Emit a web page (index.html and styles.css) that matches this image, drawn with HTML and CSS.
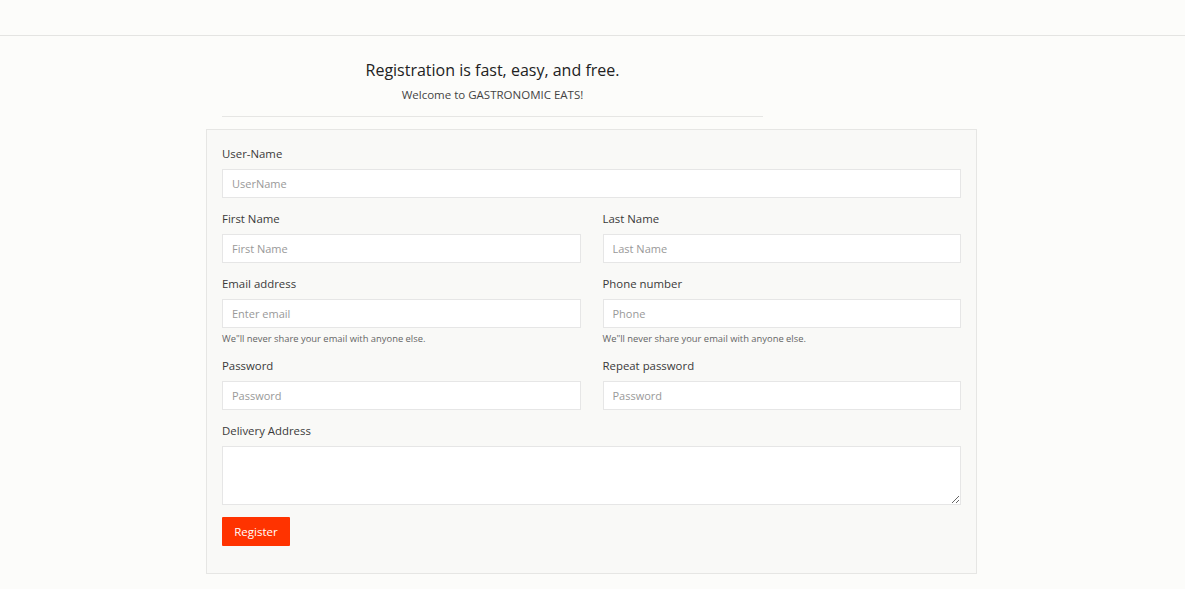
FILE: index.html
```html
<!DOCTYPE html>
<html>
<head>
<meta charset="utf-8">
<link rel="stylesheet" href="styles.css">
</head>
<body>
<header class="topbar"></header>
<main class="page">
  <div class="intro">
    <h1 class="title">Registration is fast, easy, and free.</h1>
    <p class="subtitle">Welcome to GASTRONOMIC EATS!</p>
    <hr class="rule">
  </div>
  <form class="card">
    <div class="field">
      <label class="label">User-Name</label>
      <input class="input" type="text" placeholder="UserName">
    </div>
    <div class="row">
      <div class="field">
        <label class="label">First Name</label>
        <input class="input" type="text" placeholder="First Name">
      </div>
      <div class="field">
        <label class="label">Last Name</label>
        <input class="input" type="text" placeholder="Last Name">
      </div>
    </div>
    <div class="row">
      <div class="field">
        <label class="label">Email address</label>
        <input class="input" type="text" placeholder="Enter email">
        <small class="help">We"ll never share your email with anyone else.</small>
      </div>
      <div class="field">
        <label class="label">Phone number</label>
        <input class="input" type="text" placeholder="Phone">
        <small class="help">We"ll never share your email with anyone else.</small>
      </div>
    </div>
    <div class="row">
      <div class="field">
        <label class="label">Password</label>
        <input class="input" type="password" placeholder="Password">
      </div>
      <div class="field">
        <label class="label">Repeat password</label>
        <input class="input" type="password" placeholder="Password">
      </div>
    </div>
    <div class="field">
      <label class="label">Delivery Address</label>
      <textarea class="input area"></textarea>
    </div>
    <button class="btn" type="button">Register</button>
  </form>
</main>
</body>
</html>
```

FILE: styles.css
```css
* { box-sizing: border-box; }
html, body { margin: 0; padding: 0; }
body {
  background: #fcfcfa;
  font-family: "Open Sans", "Noto Sans", sans-serif;
  color: #333;
  height: 589px;
  overflow: hidden;
}
.topbar {
  height: 36px;
  border-bottom: 1px solid #e4e4e2;
}
.page {
  width: 771px;
  margin-left: 206px;
}
.intro {
  width: 557px;
  padding-left: 16px;
  padding-top: 23px;
  text-align: center;
}
.title {
  margin: 0;
  font-size: 16px;
  font-weight: 400;
  line-height: 22px;
  color: #222;
}
.subtitle {
  margin: 5px 0 0;
  font-size: 11.5px;
  line-height: 18px;
  color: #444;
}
.rule {
  margin: 12px 0 12px;
  border: 0;
  border-top: 1px solid #e6e6e4;
}
.card {
  background: #f9f9f7;
  border: 1px solid #e6e6e4;
  padding: 15px 15px 27px;
  display: flex;
  flex-direction: column;
}
.row {
  display: flex;
  gap: 22px;
}
.row .field { flex: 1; }
.field {
  display: flex;
  flex-direction: column;
  margin-bottom: 12px;
}
.label {
  font-size: 11.4px;
  line-height: 18px;
  color: #3a3a3a;
  margin-bottom: 6px;
}
.input {
  height: 29px;
  border: 1px solid #e6e6e6;
  background: #fff;
  padding: 0 9px;
  font-family: inherit;
  font-size: 11px;
  color: #333;
  outline: none;
}
.input::placeholder { color: #999; }
.area {
  height: 59px;
  resize: vertical;
}
.help {
  font-size: 9.4px;
  line-height: 14px;
  color: #666;
  margin-top: 4px;
  margin-bottom: -1px;
}
.btn {
  align-self: flex-start;
  width: 68px;
  height: 29px;
  background: #ff3300;
  color: #fff;
  border: 0;
  border-radius: 1px;
  font-family: inherit;
  font-size: 11.5px;
  cursor: pointer;
}
```
